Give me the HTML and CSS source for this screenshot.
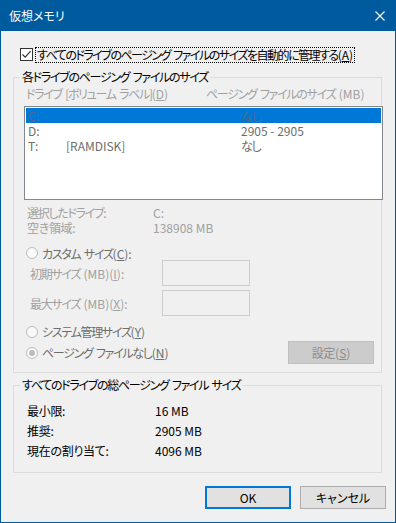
FILE: index.html
```html
<!DOCTYPE html>
<html lang="ja">
<head>
    <meta charset="UTF-8">
    <title>仮想メモリ</title>
    <link rel="stylesheet" href="styles.css">
</head>
<body>
    <div class="window">
        <div class="titlebar">
            <span class="title">仮想メモリ</span>
            <svg class="close" width="10" height="10" viewBox="0 0 10 10">
                <path d="M0.5 0.5 L9.5 9.5 M9.5 0.5 L0.5 9.5" stroke="#fff" stroke-width="1.1" fill="none"/>
            </svg>
        </div>
        <div class="dialog-body">
            <div class="auto-row">
                <span class="checkbox">
                    <svg width="11" height="11" viewBox="0 0 11 11">
                        <path d="M1.5 5.5 L4.2 8.2 L9.6 2.2" stroke="#333" stroke-width="1.2" fill="none"/>
                    </svg>
                </span>
                <span class="focus-label">すべてのドライブのページング ファイルのサイズを自動的に管理する<span class="lat">(<u>A</u>)</span></span>
            </div>

            <fieldset class="group group-drives">
                <legend>各ドライブのページング ファイルのサイズ</legend>
                <div class="list-head">
                    <span class="col-drive">ドライブ [ボリューム ラベル]<span class="lat">(<u>D</u>)</span></span>
                    <span>ページング ファイルのサイズ <span class="lat">(MB)</span></span>
                </div>
                <div class="drive-list">
                    <div class="drive-row selected">
                        <span class="c1 lat">C:</span><span class="c2"></span><span>なし</span>
                    </div>
                    <div class="drive-row">
                        <span class="c1 lat">D:</span><span class="c2"></span><span class="lat">2905 - 2905</span>
                    </div>
                    <div class="drive-row">
                        <span class="c1 lat">T:</span><span class="c2 lat">[RAMDISK]</span><span>なし</span>
                    </div>
                </div>
                <div class="info-row first">
                    <span class="info-label">選択したドライブ:</span><span class="lat">C:</span>
                </div>
                <div class="info-row">
                    <span class="info-label kanji">空き領域:</span><span class="lat">138908 MB</span>
                </div>
                <div class="radio-row custom">
                    <span class="radio"></span><span>カスタム サイズ<span class="lat">(<u>C</u>):</span></span>
                </div>
                <div class="size-row">
                    <span class="size-label">初期サイズ <span class="lat">(MB)(<u>I</u>):</span></span><span class="size-input"></span>
                </div>
                <div class="size-row second">
                    <span class="size-label">最大サイズ <span class="lat">(MB)(<u>X</u>):</span></span><span class="size-input"></span>
                </div>
                <div class="radio-row system">
                    <span class="radio"></span><span>システム管理サイズ<span class="lat">(<u>Y</u>)</span></span>
                </div>
                <div class="radio-row none">
                    <span class="radio checked"></span><span>ページング ファイルなし<span class="lat">(<u>N</u>)</span></span>
                    <button class="set-button"><span class="kanji">設定</span><span class="lat">(<u>S</u>)</span></button>
                </div>
            </fieldset>

            <fieldset class="group group-total">
                <legend>すべてのドライブの総ページング ファイル サイズ</legend>
                <div class="total-row">
                    <span class="total-label kanji">最小限:</span><span class="lat">16 MB</span>
                </div>
                <div class="total-row">
                    <span class="total-label kanji">推奨:</span><span class="lat">2905 MB</span>
                </div>
                <div class="total-row">
                    <span class="total-label kanji">現在の割り当て:</span><span class="lat">4096 MB</span>
                </div>
            </fieldset>

            <div class="actions">
                <button class="btn ok lat">OK</button>
                <button class="btn">キャンセル</button>
            </div>
        </div>
    </div>
</body>
</html>
```

FILE: styles.css
```css
body {
    margin: 0;
    padding: 0;
    background: #f0f0f0;
    font-family: "Noto Sans CJK JP", "Noto Sans", sans-serif;
    font-feature-settings: "palt" 1;
    font-size: 12px;
    color: #000;
}

.window {
    width: 396px;
    height: 523px;
    box-sizing: border-box;
    border: 1px solid #005a9e;
    border-top: 0;
    background: #f0f0f0;
}

.titlebar {
    height: 31px;
    background: #005a9e;
    color: #fff;
    display: flex;
    align-items: center;
    justify-content: space-between;
    padding: 0 10px 0 8px;
}

.title {
    line-height: 16px;
}

/* kana in the system UI font run much narrower than Noto */
.dialog-body {
    letter-spacing: -1.3px;
    word-spacing: 2px;
}

.lat {
    letter-spacing: 0;
    word-spacing: 0;
}

.kanji {
    letter-spacing: -0.3px;
}

u {
    text-decoration-thickness: 1px;
    text-underline-offset: 1px;
}

/* auto manage checkbox */
.auto-row {
    display: flex;
    align-items: flex-start;
    height: 16px;
    margin-top: 16px;
    padding-left: 19px;
}

.checkbox {
    width: 13px;
    height: 13px;
    box-sizing: border-box;
    border: 1px solid #333;
    background: #fff;
    margin-top: 1px;
    display: flex;
}

.focus-label {
    margin-left: 2px;
    padding: 0 1px;
    border: 1px dotted #000;
    line-height: 14px;
    white-space: nowrap;
    letter-spacing: -1.5px;
}

/* group boxes */
.group {
    margin: 0 0 0 12px;
    width: 369px;
    box-sizing: border-box;
    padding: 0;
    border: 1px solid #dcdcdc;
    min-inline-size: 0;
}

.group legend {
    margin-left: 6px;
    padding: 0 2px;
    line-height: 16px;
}

.group-drives {
    margin-top: 6px;
    padding-bottom: 8px;
    color: #a0a0a0;
}

.group-drives legend {
    color: #000;
}

.list-head {
    display: flex;
    margin-top: 2px;
    padding-left: 12px;
    line-height: 14px;
}

.col-drive {
    width: 180px;
}

.drive-list {
    margin: 5px 0 0 10px;
    width: 359px;
    height: 94px;
    box-sizing: border-box;
    border: 1px solid #828790;
    padding: 1px;
    background: #fff;
    color: #6d6d6d;
}

.drive-row {
    display: flex;
    height: 15px;
    line-height: 15px;
    padding-left: 2px;
}

.drive-row.selected {
    background: #0078d7;
    color: #52688a;
}

.c1 {
    width: 38px;
}

.c2 {
    width: 175px;
}

.info-row {
    display: flex;
    height: 15px;
    line-height: 15px;
    padding-left: 13px;
}

.info-row.first {
    margin-top: 5px;
}

.info-label {
    width: 126px;
}

.radio-row {
    display: flex;
    align-items: center;
    padding-left: 12px;
    color: #6d6d6d;
}

.radio {
    width: 12px;
    height: 12px;
    box-sizing: border-box;
    border: 1px solid #bcbcbc;
    border-radius: 50%;
    background: #f9f9f9;
    margin-right: 4px;
    display: flex;
    align-items: center;
    justify-content: center;
}

.radio.checked::after {
    content: "";
    width: 6px;
    height: 6px;
    border-radius: 50%;
    background: #bcbcbc;
}

.radio-row.custom {
    margin-top: 11px;
    height: 14px;
}

.radio-row.system {
    margin-top: 6px;
    height: 19px;
}

.radio-row.none {
    height: 23px;
}

.size-row {
    display: flex;
    align-items: center;
    height: 26px;
    padding-left: 16px;
}

.size-row.second {
    margin-top: 4px;
}

.size-label {
    width: 132px;
}

.size-input {
    width: 88px;
    height: 26px;
    box-sizing: border-box;
    border: 1px solid #cccccc;
    background: #f0f0f0;
}

.set-button {
    margin-left: auto;
    margin-right: 7px;
    width: 86px;
    height: 23px;
    border: 1px solid #bfbfbf;
    background: #cccccc;
    color: #8c8c8c;
    font: inherit;
    padding: 0;
}

.group-total {
    margin-top: 4px;
    padding-top: 8px;
    padding-bottom: 11px;
}

.total-row {
    display: flex;
    height: 20px;
    line-height: 20px;
    padding-left: 13px;
}

.total-label {
    width: 128px;
}

/* bottom buttons */
.actions {
    display: flex;
    justify-content: flex-end;
    gap: 9px;
    margin-top: 13px;
    padding-right: 9px;
}

.btn {
    width: 86px;
    height: 23px;
    box-sizing: border-box;
    border: 1px solid #adadad;
    background: #e1e1e1;
    font: inherit;
    color: #000;
    padding: 0;
}

.btn.ok {
    border: 2px solid #0078d7;
}
```
